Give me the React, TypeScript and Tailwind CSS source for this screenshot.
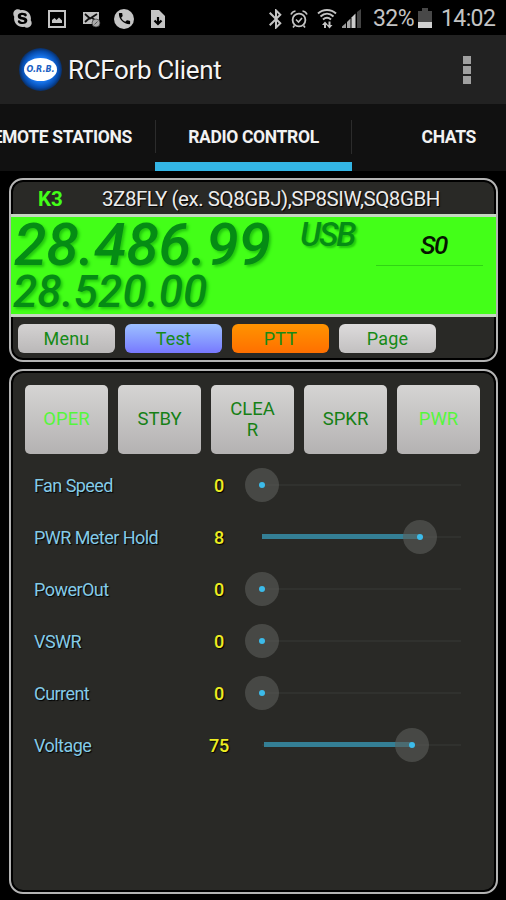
import { FaSkype } from "react-icons/fa";
import { MdBluetooth, MdPhone } from "react-icons/md";

interface Meter {
  label: string;
  value: number;
  start: number;
  fill: number;
}

const METERS: Meter[] = [
  { label: "Fan Speed", value: 0, start: 0, fill: 0 },
  { label: "PWR Meter Hold", value: 8, start: 0, fill: 158 },
  { label: "PowerOut", value: 0, start: 0, fill: 0 },
  { label: "VSWR", value: 0, start: 0, fill: 0 },
  { label: "Current", value: 0, start: 0, fill: 0 },
  { label: "Voltage", value: 75, start: 2, fill: 150 },
];

const AMP_KEYS = [
  { label: "OPER", active: true },
  { label: "STBY", active: false },
  { label: "CLEAR", active: false },
  { label: "SPKR", active: false },
  { label: "PWR", active: true },
];

const SOFT_KEYS = [
  { label: "Menu", className: "from-[#d4d2d2] to-[#bab8b8]" },
  { label: "Test", className: "from-[#9dc0ff] to-[#7878ff]" },
  { label: "PTT", className: "from-[#ff9300] to-[#ff6f00]" },
  { label: "Page", className: "from-[#dddbdc] to-[#c2c0c0]" },
];

function ImageIcon() {
  return (
    <svg className="h-[18px] w-[18px]" viewBox="0 0 18 18" fill="none">
      <rect x="1" y="1" width="16" height="16" stroke="#c4c4c4" strokeWidth="2" />
      <path d="M4 13V10l2.5-2 2 2L11 7.5l3 3V13z" fill="#c4c4c4" />
    </svg>
  );
}

function MailIcon() {
  return (
    <svg className="h-[18px] w-[19px]" viewBox="0 0 19 18">
      <path d="M1 2h16v12H1z" fill="#c0c0c0" />
      <path d="M3 4l5 4.5L15 4M3 12l4-3.5M10 8l3 2" fill="none" stroke="#111" strokeWidth="1.8" />
      <circle cx="14" cy="13" r="4" fill="#aaa" stroke="#333" strokeWidth=".7" />
      <path d="M12.5 14.5l3-3" stroke="#555" />
    </svg>
  );
}

function DownloadIcon() {
  return (
    <svg className="h-5 w-4" viewBox="0 0 16 20">
      <path d="M1 1h8l6 6v12H1z" fill="#c4c4c4" />
      <path d="M8 8v7M4.5 11.5L8 15l3.5-3.5" fill="none" stroke="#000" strokeWidth="2.2" />
    </svg>
  );
}

function AlarmIcon() {
  return (
    <svg className="h-[20px] w-[18px]" viewBox="0 0 18 20" fill="none" stroke="#c4c4c4">
      <circle cx="9" cy="11" r="6.4" strokeWidth="1.8" />
      <path d="M6 10.5l2.5 2.5L12 9M4.5 16.5L3 18.5M13.5 16.5l1.5 2" strokeWidth="1.6" />
      <path d="M1 5.5C1.8 3.4 3.2 2.3 5.5 2M17 5.5c-.8-2.1-2.2-3.2-4.5-3.5" strokeWidth="1.6" />
    </svg>
  );
}

function WifiIcon() {
  return (
    <svg className="h-[21px] w-5" viewBox="0 0 20 21" fill="none" stroke="#c4c4c4">
      <path d="M1 5.5C6 .8 14 .8 19 5.5M3.5 8.5c4-3.6 9-3.6 13 0M6 11.5c2.5-2.2 5.5-2.2 8 0" strokeWidth="2" />
      <path d="M5 17L8 13.5l3 3.5zM9.5 17l3 3.5 3-3.5z" fill="#c4c4c4" stroke="none" />
      <path d="M8 16v4M12.5 13.5v4" strokeWidth="2" />
    </svg>
  );
}

function SignalIcon() {
  return (
    <svg className="h-[19px] w-[19px]" viewBox="0 0 19 19">
      <path d="M0 19V17.5L4 14v5z" fill="#999" />
      <path d="M5 19v-6l3.5-3.5V19z" fill="#aaa" />
      <path d="M9.5 19V8.5L13.5 4.5V19z" fill="#ccc" />
      <path d="M15 19V3L19 0v19z" fill="#444" />
    </svg>
  );
}

function StatusBar() {
  return (
    <div className="flex h-[35px] items-center pt-0.5 text-[#c4c4c4]">
      <FaSkype className="ml-3 size-[21px]" />
      <div className="ml-[15px]">
        <ImageIcon />
      </div>
      <div className="ml-4">
        <MailIcon />
      </div>
      <div className="ml-[13px] flex size-[20px] items-center justify-center rounded-full bg-[#c4c4c4] text-black">
        <MdPhone className="size-[15px]" />
      </div>
      <div className="ml-4">
        <DownloadIcon />
      </div>
      <MdBluetooth className="ml-[98px] size-[24px] stroke-current" />
      <div className="ml-[2px]">
        <AlarmIcon />
      </div>
      <div className="ml-[9px]">
        <WifiIcon />
      </div>
      <div className="ml-[5px]">
        <SignalIcon />
      </div>
      <span className="ml-3 w-[43px] pt-0.5 text-[23px] tracking-[-0.6px] whitespace-nowrap">32%</span>
      <svg className="ml-[2px] h-[21px] w-3.5 shrink-0" viewBox="0 0 14 21">
        <path d="M4 0h6v3h4v11H0V3h4z" fill="#484848" />
        <path d="M0 14h14v6H0z" fill="#d0d0d0" />
      </svg>
      <span className="ml-[9px] pt-0.5 text-[23px] tracking-[-0.6px]">14:02</span>
    </div>
  );
}

function ActionBar() {
  return (
    <div className="flex h-[69px] items-center bg-[#222]">
      <div className="ml-[19px] flex size-[43px] items-center justify-center rounded-full bg-[radial-gradient(circle,#1977ef_40%,#064cae_60%,#0b2b5b_72%)]">
        <div className="flex h-[23px] w-[33px] items-center justify-center rounded-[50%] bg-white font-['DejaVu_Sans'] text-[8px] font-bold italic text-[#1c62c4]">
          O.R.B.
        </div>
      </div>
      <h1 className="ml-[6px] pt-0.5 text-[26px] tracking-[-0.35px] text-[#f4f4f4] [text-shadow:1px_1px_1px_#000]">
        RCForb Client
      </h1>
      <div className="mr-[35px] ml-auto flex flex-col gap-[2px]">
        <i className="size-2 bg-[#a0a0a0]" />
        <i className="size-2 bg-[#a0a0a0]" />
        <i className="size-2 bg-[#a0a0a0]" />
      </div>
    </div>
  );
}

function Tabs() {
  return (
    <div className="flex h-[67px] overflow-hidden bg-[#111] text-[17.5px] font-bold tracking-[-0.35px] text-[#f2f2f2]">
      <div className="flex w-[155px] shrink-0 items-center justify-end pr-[23px] whitespace-nowrap">
        REMOTE STATIONS
      </div>
      <div className="relative flex w-[197px] shrink-0 items-center justify-center">
        <i className="absolute top-4 left-0 h-[33px] w-px bg-[#2c2c2c]" />
        RADIO CONTROL
        <i className="absolute top-4 right-0 h-[34px] w-px bg-[#2c2c2c]" />
        <i className="absolute bottom-0 left-0 h-[9px] w-full bg-[#33b5e5]" />
      </div>
      <div className="flex grow items-center justify-end pr-[30px]">CHATS</div>
    </div>
  );
}

function RadioPanel() {
  return (
    <section className="mr-2 ml-[9px] mt-[7px] flex h-[184px] flex-col overflow-hidden rounded-[14px] border-2 border-[#b4b4b4] bg-[#292926] shadow-[inset_0_0_0_2px_#000]">
      <div className="flex h-[34px] shrink-0 items-center pt-1 text-[20.5px]">
        <span className="ml-[27px] w-[64px] font-bold text-[#43ff18]">K3</span>
        <span className="tracking-[-0.45px] whitespace-nowrap text-[#ececec] [text-shadow:1px_1px_1px_#000]">
          3Z8FLY (ex. SQ8GBJ),SP8SIW,SQ8GBH
        </span>
      </div>
      <div className="flex h-[103px] shrink-0 border-y-[3px] border-[#c6d6c2] bg-[#43ff18] font-medium italic text-[#058c14]">
        <div className="flex w-[281px] shrink-0 flex-col whitespace-nowrap [text-shadow:2px_2px_3px_#22c60e]">
          <span className="mt-[5px] ml-[3px] h-[54px] text-[59px] leading-[45px] tracking-[-0.3px]">
            28.486.99
          </span>
          <span className="ml-0.5 text-[44px] leading-[33px] tracking-[0.1px]">28.520.00</span>
        </div>
        <span className="mt-[4px] ml-[8px] w-[76px] text-[33px] leading-[27px] tracking-[-2px] [text-shadow:2px_2px_2px_#22c60e]">
          USB
        </span>
        <div className="mt-[15px] flex h-[34px] w-[107px] flex-col items-center border-b border-[#30d414]">
          <span className="ml-2 text-[26px] leading-[26px] tracking-[-1.5px] text-[#061500]">S0</span>
        </div>
      </div>
      <div className="ml-[7px] flex gap-[10px] pt-[7px]">
        {SOFT_KEYS.map((key) => (
          <button
            key={key.label}
            type="button"
            className={`h-[29px] w-[97px] rounded-md bg-linear-to-b text-[18px] tracking-[0.2px] text-[#168a16] ${key.className}`}
          >
            {key.label}
          </button>
        ))}
      </div>
    </section>
  );
}

function MeterRow({ meter }: { meter: Meter }) {
  return (
    <div className="flex h-[52px] items-center">
      <span className="w-[163px] text-[18px] tracking-[-0.55px] text-[#84cbe8] [text-shadow:1px_1px_1px_#000]">
        {meter.label}
      </span>
      <span className="w-11 text-center text-[18px] font-medium tracking-[-0.3px] text-[#eded22] [text-shadow:1px_1px_1px_#000]">
        {meter.value}
      </span>
      <div className="relative ml-[21px] h-[34px] w-[199px]">
        <i className="absolute top-4 left-0 h-0.5 w-full bg-[#30312e]" />
        <i
          className="absolute top-[14px] h-[5px] bg-[#347f95]"
          style={{ left: meter.start, width: meter.fill - meter.start }}
        />
        <div
          className="absolute top-0 flex size-[34px] -translate-x-1/2 items-center justify-center rounded-full bg-[#5c5d5a]/60"
          style={{ left: meter.fill }}
        >
          <i className="size-1.5 rounded-full bg-[#3cbbea]" />
        </div>
      </div>
    </div>
  );
}

function AmpPanel() {
  return (
    <section className="mr-2 ml-[9px] mt-[7px] h-[525px] rounded-[14px] border-2 border-[#b4b4b4] bg-[#292926] shadow-[inset_0_0_0_2px_#000]">
      <div className="ml-[14px] flex gap-[10px] pt-[14px]">
        {AMP_KEYS.map((key) => (
          <button
            key={key.label}
            type="button"
            className={`h-[69px] w-[83px] rounded-[5px] bg-linear-to-b from-[#d5d4d3] to-[#b4b2b2] px-4 text-[18.5px] leading-[21px] break-all ${
              key.active ? "text-[#55f63c]" : "text-[#168016]"
            }`}
          >
            {key.label}
          </button>
        ))}
      </div>
      <div className="mt-[5px] ml-[23px]">
        {METERS.map((meter) => (
          <MeterRow key={meter.label} meter={meter} />
        ))}
      </div>
    </section>
  );
}

export default function App() {
  return (
    <main className="h-[900px] w-[506px] overflow-hidden bg-black font-[Roboto,sans-serif]">
      <StatusBar />
      <ActionBar />
      <Tabs />
      <RadioPanel />
      <AmpPanel />
    </main>
  );
}
